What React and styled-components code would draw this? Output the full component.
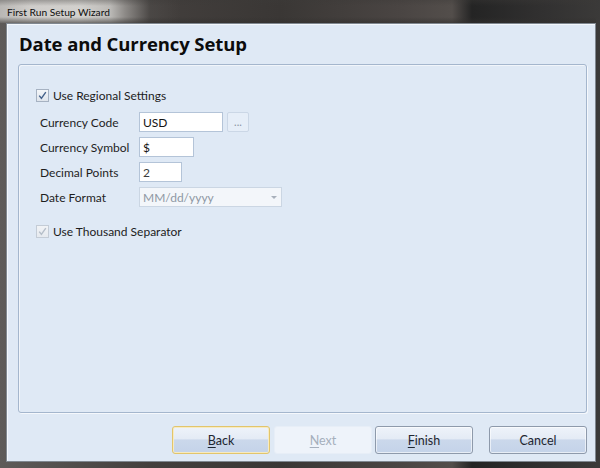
import React from "react";
import styled, { createGlobalStyle, css } from "styled-components";

const Global = createGlobalStyle`
  html, body { margin: 0; padding: 0; }
  body {
    width: 600px;
    height: 468px;
    overflow: hidden;
    background: #2e2d2c;
    font-family: "Lato", "Open Sans", sans-serif;
  }
`;

const Frame = styled.div`
  width: 600px;
  height: 468px;
  display: flex;
  flex-direction: column;
  box-sizing: border-box;
  padding: 0 4px 6px 6px;
  background: linear-gradient(90deg, #5e5b59 0px, #433f3d 150px, #3a3735 280px, #4a4543 400px, #534e4b 452px, #242424 472px, #313030 540px, #3b3a39 600px);
`;

const TitleBar = styled.div`
  height: 23px;
  flex: 0 0 23px;
  display: flex;
  align-items: center;
  margin-left: -6px;
  padding-left: 7px;
  font-size: 10.2px;
  color: #0e0e0e;
  background:
    linear-gradient(180deg, rgba(60, 58, 56, 0.35) 0px, rgba(60, 58, 56, 0) 6px, rgba(60, 58, 56, 0) 17px, rgba(50, 48, 46, 0.6) 23px),
    linear-gradient(90deg, #b9b7b4 0px, #cfcdca 30px, #d2d0cd 80px, #bcbab7 110px, #8d8a87 125px, rgba(80, 77, 75, 0.6) 150px, rgba(0, 0, 0, 0) 180px);
`;

const Client = styled.div`
  flex: 1;
  display: flex;
  flex-direction: column;
  background: #dfe9f5;
  border: 1px solid #7f8790;
  box-shadow: inset 1px 1px 0 #f3f7fb;
  padding: 6px 8px 7px 11px;
  box-sizing: border-box;
`;

const Heading = styled.h1`
  margin: 0 0 0 1px;
  height: 34px;
  font-family: "Open Sans", sans-serif;
  font-size: 18.5px;
  font-weight: 700;
  color: #0c0c0c;
  line-height: 28px;
  letter-spacing: -0.1px;
`;

const Group = styled.div`
  flex: 1;
  border: 1px solid #a4b6cd;
  border-radius: 3px;
  box-shadow: 1px 1px 0 #f5f8fc, inset 1px 1px 0 #f1f5fa;
  padding: 23px 0 0 17px;
  display: flex;
  flex-direction: column;
  align-items: flex-start;
`;

const CheckRow = styled.label`
  display: flex;
  align-items: center;
  gap: 4px;
  height: 14px;
  font-size: 12px;
  color: #1c1c1c;
`;

const Box = styled.span`
  width: 11px;
  height: 11px;
  border: 1px solid ${(p) => (p.$disabled ? "#c4ccd6" : "#a6b2c2")};
  background: ${(p) =>
    p.$disabled
      ? "linear-gradient(#f1f3f6, #e6eaef)"
      : "linear-gradient(#f4f6f9, #dfe5ec)"};
  display: flex;
  align-items: center;
  justify-content: center;
`;

const Fields = styled.div`
  display: grid;
  grid-template-columns: 95px 84px 22px;
  grid-auto-rows: 20px;
  row-gap: 5px;
  column-gap: 4px;
  align-items: center;
  justify-items: start;
  margin: 10px 0 17px 4px;
`;

const Label = styled.span`
  font-size: 12px;
  color: #1e1e1e;
  grid-column: 1;
`;

const Input = styled.div`
  grid-column: ${(p) => (p.$wide ? "2 / span 2" : "2")};
  width: ${(p) => p.$w}px;
  height: 20px;
  box-sizing: border-box;
  border: 1px solid ${(p) => (p.$disabled ? "#cbd6e3" : "#b4c4d8")};
  background: ${(p) => (p.$disabled ? "#f3f6fa" : "#ffffff")};
  display: flex;
  align-items: center;
  justify-content: space-between;
  padding: 0 2px 0 3px;
  font-size: 12px;
  color: ${(p) => (p.$disabled ? "#8f98a4" : p.$muted ? "#3c3c3c" : "#141414")};
`;

const EllipsisButton = styled.div`
  grid-column: 3;
  width: 22px;
  height: 20px;
  box-sizing: border-box;
  border: 1px solid #cbd7e6;
  border-radius: 2px;
  background: #e6eef8;
  color: #8a95a4;
  font-size: 11px;
  display: flex;
  align-items: flex-end;
  justify-content: center;
  padding-bottom: 4px;
  line-height: 1;
`;

const Arrow = styled.span`
  width: 0;
  height: 0;
  border-left: 3px solid transparent;
  border-right: 3px solid transparent;
  border-top: 3px solid #a8b0bb;
  margin-right: 2px;
`;

const Footer = styled.div`
  display: flex;
  justify-content: flex-end;
  align-items: center;
  margin-top: 13px;
  height: 28px;
`;

const Button = styled.div`
  width: 98px;
  height: 28px;
  box-sizing: border-box;
  border-radius: 3px;
  margin-left: ${(p) => p.$gap}px;
  display: flex;
  align-items: center;
  justify-content: center;
  font-size: 12.5px;
  color: #1e2630;
  border: 1px solid #8e9aab;
  background: linear-gradient(#eef3fa 0%, #e4ebf5 45%, #cbd8eb 50%, #c4d3e9 100%);
  box-shadow: inset 0 0 0 1px rgba(255, 255, 255, 0.6);
  ${(p) =>
    p.$focused &&
    css`
      border-color: #e2c56c;
      box-shadow: inset 0 0 0 1px #f7ebc1;
    `}
  ${(p) =>
    p.$disabled &&
    css`
      border-color: #e7eef7;
      background: #eef3fa;
      box-shadow: none;
      color: #a5afbc;
    `}
  u { text-decoration-thickness: 1px; text-underline-offset: 2px; }
`;

function Check({ disabled }) {
  return (
    <Box $disabled={disabled}>
      <svg width="9" height="9" viewBox="0 0 9 9">
        <path
          d="M1.2 4.6 L3.4 7.3 L7.8 1.2"
          fill="none"
          stroke={disabled ? "#b5bec9" : "#44618a"}
          strokeWidth="1.4"
        />
      </svg>
    </Box>
  );
}

export default function App() {
  return (
    <>
      <Global />
      <Frame>
        <TitleBar>First Run Setup Wizard</TitleBar>
        <Client>
          <Heading>Date and Currency Setup</Heading>
          <Group>
            <CheckRow>
              <Check />
              Use Regional Settings
            </CheckRow>
            <Fields>
              <Label>Currency Code</Label>
              <Input $w={84}>USD</Input>
              <EllipsisButton>...</EllipsisButton>
              <Label>Currency Symbol</Label>
              <Input $w={55}>$</Input>
              <Label>Decimal Points</Label>
              <Input $w={43} $muted>2</Input>
              <Label>Date Format</Label>
              <Input $w={143} $wide $disabled>
                MM/dd/yyyy
                <Arrow />
              </Input>
            </Fields>
            <CheckRow>
              <Check disabled />
              Use Thousand Separator
            </CheckRow>
          </Group>
          <Footer>
            <Button $focused>
              <span><u>B</u>ack</span>
            </Button>
            <Button $gap={4} $disabled>
              <span><u>N</u>ext</span>
            </Button>
            <Button $gap={3}>
              <span><u>F</u>inish</span>
            </Button>
            <Button $gap={16}>Cancel</Button>
          </Footer>
        </Client>
      </Frame>
    </>
  );
}
